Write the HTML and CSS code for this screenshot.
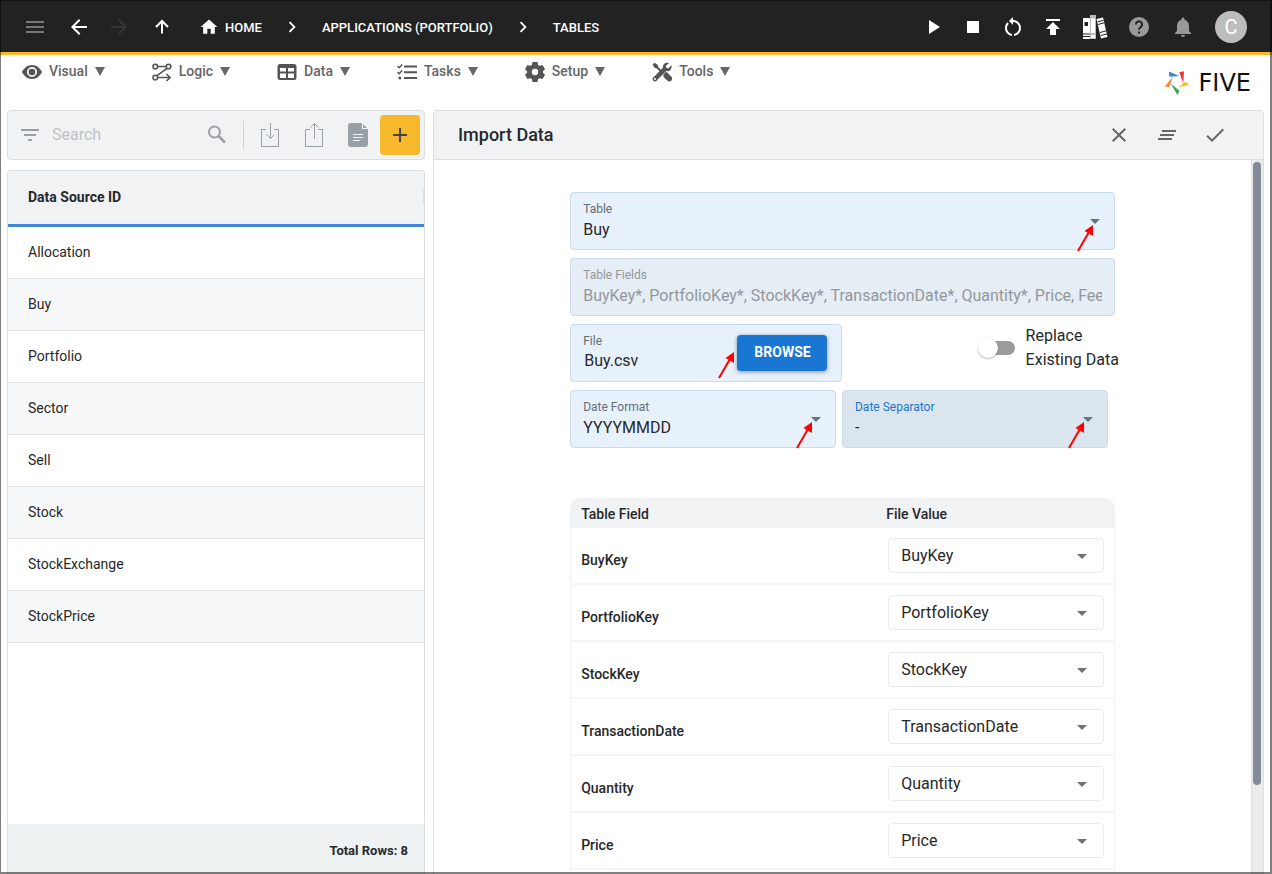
FILE: index.html
```html
<!DOCTYPE html>
<html lang="en">
<head>
<meta charset="utf-8">
<title>Import Data - Five</title>
<link rel="stylesheet" href="styles.css">
</head>
<body>
<div class="app">
  <header class="topbar">
    <button class="icon-btn dim" aria-label="Menu"><svg width="24" height="24" viewBox="0 0 24 24"><path d="M3 18h18v-2H3zm0-5h18v-2H3zm0-7v2h18V6z"/></svg></button>
    <nav class="crumbs" aria-label="Breadcrumb">
      <button class="icon-btn" aria-label="Back"><svg width="24" height="24" viewBox="0 0 24 24"><path d="M20 11H7.800l5.600-5.600L12 4l-8 8 8 8 1.400-1.400L7.800 13H20z"/></svg></button>
      <button class="icon-btn off" aria-label="Forward"><svg width="24" height="24" viewBox="0 0 24 24"><path d="M12 4l-1.400 1.400L16.200 11H4v2h12.200l-5.600 5.600L12 20l8-8z"/></svg></button>
      <button class="icon-btn up" aria-label="Up"><svg width="20" height="24" viewBox="0 0 20 24" class="line"><path d="M10 18.500V6M4 12l6-6 6 6" stroke-width="2"/></svg></button>
      <a class="crumb home" href="#"><svg width="20" height="20" viewBox="0 0 24 24"><path d="M10 20v-6h4v6h5v-8h3L12 3 2 12h3v8z"/></svg>HOME</a>
      <svg class="chev" width="20" height="20" viewBox="1 1 22 22"><path d="M10 6L8.600 7.400l4.600 4.600-4.600 4.600L10 18l6-6z"/></svg>
      <a class="crumb" href="#">APPLICATIONS (PORTFOLIO)</a>
      <svg class="chev" width="20" height="20" viewBox="1 1 22 22"><path d="M10 6L8.600 7.400l4.600 4.600-4.600 4.600L10 18l6-6z"/></svg>
      <a class="crumb" href="#">TABLES</a>
    </nav>
    <div class="actions">
      <button class="icon-btn" aria-label="Run"><svg width="24" height="24" viewBox="0 0 24 24"><path d="M8 5v14l11-7z"/></svg></button>
      <button class="icon-btn" aria-label="Stop"><svg width="24" height="24" viewBox="0 0 24 24"><path d="M6 6h12v12H6z"/></svg></button>
      <button class="icon-btn" aria-label="Restart"><svg width="24" height="24" viewBox="0 0 24 24"><path d="M12 5V2L8 6l4 4V7c3.310 0 6 2.690 6 6 0 2.970-2.170 5.430-5 5.910v2.020c3.950-.49 7-3.850 7-7.930 0-4.420-3.580-8-8-8zm-6 8c0-1.650.67-3.150 1.760-4.240L6.340 7.340C4.900 8.790 4 10.790 4 13c0 4.080 3.050 7.440 7 7.930v-2.020c-2.830-.48-5-2.940-5-5.910z"/></svg></button>
      <button class="icon-btn" aria-label="Deploy"><svg width="24" height="24" viewBox="0 0 24 24"><path d="M5 4v2h14V4zm0 10h4v6h6v-6h4l-7-7z"/></svg></button>
      <button class="icon-btn wide" aria-label="Documentation"><svg width="26" height="26" viewBox="0 0 26 26"><path d="M1 4h7v21H1z"/><path fill="#bbb" d="M8 1h6v24H8z"/><path d="M9 4.500h4V19H9zM9 21h4v3H9z"/><path d="M14.500 5l6.500-1.500 4.500 19.500-6.500 1.500z"/><path class="ink" d="M2.500 8h3.500v4H2.500zM1 19.500h7v1H1zM1 22h7v1H1z"/><path d="M15.500 8l6-1.700M16 10.500l6-1.700M18 18.500l6.500-1.700M18.700 21.500l6.500-1.700" stroke="#222" fill="none"/></svg></button>
      <button class="icon-btn wide soft" aria-label="Help"><svg width="24" height="24" viewBox="0 0 24 24"><circle cx="12" cy="12" r="10"/><path d="M8.900 9.500a3.100 3.100 0 1 1 5 2.400c-1.200.9-1.900 1.300-1.900 2.900" fill="none" stroke="#222" stroke-width="2"/><path class="ink" d="M11 16.500h2v2h-2z"/></svg></button>
      <button class="icon-btn wide soft" aria-label="Notifications"><svg width="24" height="24" viewBox="0 0 24 24"><path d="M12 22a2 2 0 0 0 2-2h-4a2 2 0 0 0 2 2zm6-6v-5c0-3.100-1.600-5.600-4.500-6.300V4a1.500 1.500 0 0 0-3 0v.7C7.600 5.400 6 7.900 6 11v5l-2 2v1h16v-1z"/></svg></button>
      <button class="avatar" aria-label="Account">C</button>
    </div>
  </header>

  <div class="menubar">
    <nav class="menus" aria-label="Main">
      <button class="menu"><svg width="20" height="20" viewBox="0 0 20 20"><path fill-rule="evenodd" d="M0 10c2-4.200 5.600-7 10-7s8 2.800 10 7c-2 4.200-5.600 7-10 7S2 14.200 0 10zm10-5a5 5 0 1 0 0 10 5 5 0 0 0 0-10z"/><circle cx="10" cy="10" r="3.300"/></svg><span>Visual</span><i></i></button>
      <button class="menu"><svg width="20" height="20" viewBox="0 0 20 20"><g class="line" stroke-width="1.600"><circle cx="3.300" cy="4.500" r="2.300"/><circle cx="16.500" cy="4.500" r="2.300"/><circle cx="3.300" cy="15.500" r="2.300"/><path d="M5.700 4.500h8.500M15 6.300L5 13.700M5.700 15.500H18M14.500 12l3.500 3.500-3.500 3.500"/></g></svg><span>Logic</span><i></i></button>
      <button class="menu"><svg width="20" height="20" viewBox="0 0 20 20"><path fill-rule="evenodd" d="M3 2h14a2.500 2.500 0 0 1 2.500 2.500v11A2.500 2.500 0 0 1 17 18H3a2.500 2.500 0 0 1-2.500-2.500v-11A2.500 2.500 0 0 1 3 2zm0 4v3.500h6V6zm8 0v3.500h6V6zm-8 5.500V16h6v-4.500zm8 0V16h6v-4.500z"/></svg><span>Data</span><i></i></button>
      <button class="menu"><svg width="20" height="20" viewBox="0 0 20 20"><path d="M7 3.500h13v2H7zM7 9.200h13v2H7zM7 15h13v2H7z"/><circle cx="2.800" cy="16" r="1.500"/><path class="line" stroke-width="1.500" d="M.5 4l1.700 1.700L5.200 2.500M.5 10l1.700 1.700L5.200 8.500"/></svg><span>Tasks</span><i></i></button>
      <button class="menu"><svg width="20" height="20" viewBox="0 0 20 20"><path fill-rule="evenodd" d="M7.500 0h5l.7 2.900 1.600.9L17.600 3l2.400 4.200-2 2.100v1.500l2 2L17.600 17l-2.800-.8-1.600.9-.7 2.900h-5l-.7-2.900-1.600-.9-2.800.8L0 12.800l2-2V9.300L0 7.200 2.400 3l2.800.8 1.600-.9zM10 6.800a3.200 3.200 0 1 0 0 6.400 3.200 3.200 0 0 0 0-6.400z"/></svg><span>Setup</span><i></i></button>
      <button class="menu"><svg width="20" height="20" viewBox="0 0 20 20"><path d="M2.500.8l3 2 .8 2.200 3.700 3.700L8.500 10.200 4.800 6.500l-2.200-.8-2-3zM11.500 12l3-2.200 4.700 4.700a2.500 2.500 0 0 1-3.700 4.200L11.500 15z"/><path fill-rule="evenodd" d="M17 1l-3.200 3 .6 1.800 1.800.6L19.400 3.200c1 3.500-1.700 6.600-5.200 5.900L4.600 18.700a2.300 2.300 0 0 1-3.300-3.300L10.900 5.800C10.200 2.500 13.500-.3 17 1zM3 16a1 1 0 1 0 0 2 1 1 0 0 0 0-2z"/></svg><span>Tools</span><i></i></button>
    </nav>
    <a class="brand" href="#"><svg width="24" height="24" viewBox="0 0 24 24"><path fill="#3f83dc" d="M4 .5L14.300 5l-10 .7z"/><path fill="#e5353b" d="M14.300 1.200l4.700-1-.8 12z"/><path fill="#f8b82c" d="M13.500 16.200l6.800-5.500 3.700 3z"/><path fill="#3aa655" d="M5.700 12.700l8.800 7-2.200 4z"/><path fill="#f58634" d="M7.800 5.500L4.300 16.300 0 15.500z"/></svg><span>FIVE</span></a>
  </div>

  <main class="content">
    <section class="side">
      <div class="tools">
        <svg class="filter" width="24" height="24" viewBox="0 0 24 24"><path d="M3 6v2h18V6zm3 5v2h12v-2zm4 5v2h4v-2z"/></svg>
        <input class="search" type="search" placeholder="Search" aria-label="Search">
        <button class="tool" aria-label="Find"><svg width="24" height="24" viewBox="0 0 24 24"><circle cx="9.500" cy="9" r="5.500" fill="none" stroke="#98a0a6" stroke-width="2"/><path d="M13.500 13l6.500 6.500" stroke="#98a0a6" stroke-width="2.500"/></svg></button>
        <div class="rule"></div>
        <button class="tool" aria-label="Import"><svg width="20" height="26" viewBox="0 0 20 26" class="line" stroke-width="1"><path d="M6 7.500H1.500v17h17v-17H14M10.500 1v15.500M6.500 12.500l4 4 4-4"/></svg></button>
        <button class="tool" aria-label="Export"><svg width="20" height="26" viewBox="0 0 20 26" class="line" stroke-width="1"><path d="M6 7.500H1.500v17h17v-17H14M10.500 17V1.500M6.500 5.500l4-4 4 4"/></svg></button>
        <button class="tool" aria-label="Report"><svg width="20" height="24" viewBox="0 0 20 24"><path d="M3 0h11l6 6v15a3 3 0 0 1-3 3H3a3 3 0 0 1-3-3V3a3 3 0 0 1 3-3z"/><path d="M14.500 0v5.500H20M5 11.500h10M5 14.500h10M5 17.500h7" stroke="#f1f2f4" stroke-width="1.200" fill="none"/></svg></button>
        <button class="add" aria-label="Add"><svg width="24" height="24" viewBox="0 0 24 24"><path d="M19 13h-6v6h-2v-6H5v-2h6V5h2v6h6z"/></svg></button>
      </div>
      <div class="list">
        <table class="sources">
          <thead><tr><th scope="col"><div class="head">Data Source ID</div></th></tr></thead>
          <tbody>
            <tr><td>Allocation</td></tr>
            <tr><td>Buy</td></tr>
            <tr><td>Portfolio</td></tr>
            <tr><td>Sector</td></tr>
            <tr><td>Sell</td></tr>
            <tr><td>Stock</td></tr>
            <tr><td>StockExchange</td></tr>
            <tr><td>StockPrice</td></tr>
          </tbody>
        </table>
        <div class="total">Total Rows: 8</div>
      </div>
    </section>

    <section class="panel">
      <div class="panel-head">
        <h1>Import Data</h1>
        <button class="head-btn" aria-label="Close"><svg width="24" height="24" viewBox="0 0 24 24"><path d="M19 6.400L17.600 5 12 10.600 6.400 5 5 6.400l5.600 5.600L5 17.600 6.400 19l5.600-5.600 5.600 5.600 1.400-1.400-5.600-5.600z"/></svg></button>
        <button class="head-btn" aria-label="Clear all"><svg width="24" height="24" viewBox="0 0 24 24"><path d="M5 13h14v-2H5zm-2 4h14v-2H3zM7 7v2h14V7z"/></svg></button>
        <button class="head-btn" aria-label="Save"><svg width="24" height="24" viewBox="0 0 24 24"><path d="M9 16.200L4.800 12l-1.400 1.400L9 19 21 7l-1.400-1.400z"/></svg></button>
      </div>
      <div class="panel-body">
        <div class="form-area">
          <div class="field">
            <label for="table">Table</label>
            <select id="table"><option>Buy</option></select>
            <svg class="pointer" width="18" height="28" viewBox="0 0 18 28"><path d="M1 27L12 8" stroke="red" stroke-width="2"/><path fill="red" d="M16 1v11L7.500 7z"/></svg>
          </div>
          <div class="field disabled">
            <label for="fields">Table Fields</label>
            <input id="fields" type="text" disabled value="BuyKey*, PortfolioKey*, StockKey*, TransactionDate*, Quantity*, Price, Fees">
          </div>
          <div class="file-row">
            <div class="field file">
              <div class="file-text">
                <label for="file">File</label>
                <input id="file" type="text" readonly value="Buy.csv">
              </div>
              <button class="browse">BROWSE</button>
              <svg class="pointer" width="18" height="28" viewBox="0 0 18 28"><path d="M1 27L12 8" stroke="red" stroke-width="2"/><path fill="red" d="M16 1v11L7.500 7z"/></svg>
            </div>
            <div class="switch">
              <input id="replace" type="checkbox" role="switch">
              <label for="replace">Replace<br>Existing Data</label>
            </div>
          </div>
          <div class="date-row">
            <div class="field">
              <label for="format">Date Format</label>
              <select id="format"><option>YYYYMMDD</option></select>
              <svg class="pointer" width="18" height="28" viewBox="0 0 18 28"><path d="M1 27L12 8" stroke="red" stroke-width="2"/><path fill="red" d="M16 1v11L7.500 7z"/></svg>
            </div>
            <div class="field focused">
              <label for="separator">Date Separator</label>
              <select id="separator"><option>-</option></select>
              <svg class="pointer" width="18" height="28" viewBox="0 0 18 28"><path d="M1 27L12 8" stroke="red" stroke-width="2"/><path fill="red" d="M16 1v11L7.500 7z"/></svg>
            </div>
          </div>
          <table class="mapping">
            <thead><tr><th scope="col">Table Field</th><th scope="col">File Value</th></tr></thead>
            <tbody>
              <tr><td><label for="m1">BuyKey</label></td><td><div class="pick"><select id="m1"><option>BuyKey</option></select></div></td></tr>
              <tr><td><label for="m2">PortfolioKey</label></td><td><div class="pick"><select id="m2"><option>PortfolioKey</option></select></div></td></tr>
              <tr><td><label for="m3">StockKey</label></td><td><div class="pick"><select id="m3"><option>StockKey</option></select></div></td></tr>
              <tr><td><label for="m4">TransactionDate</label></td><td><div class="pick"><select id="m4"><option>TransactionDate</option></select></div></td></tr>
              <tr><td><label for="m5">Quantity</label></td><td><div class="pick"><select id="m5"><option>Quantity</option></select></div></td></tr>
              <tr><td><label for="m6">Price</label></td><td><div class="pick"><select id="m6"><option>Price</option></select></div></td></tr>
            </tbody>
          </table>
        </div>
        <div class="scroll"><div class="thumb"></div></div>
      </div>
    </section>
  </main>
</div>
</body>
</html>
```
FILE: styles.css
```css
* { box-sizing: border-box; }

body {
  margin: 0;
  font-family: Roboto, "Liberation Sans", sans-serif;
  font-size: 14px;
  color: #26282b;
  background: #fff;
}

button {
  font: inherit;
  color: inherit;
  border: 0;
  padding: 0;
  background: none;
  cursor: pointer;
}

a { color: inherit; text-decoration: none; }
svg { display: block; flex: none; fill: currentColor; }
.line { fill: none; stroke: currentColor; }
.ink { fill: #222; }

.app {
  height: 100vh;
  display: flex;
  flex-direction: column;
  overflow: hidden;
}

/* Window outline drawn over the whole page */
.app::after {
  content: "";
  position: fixed;
  inset: 0;
  border: solid rgba(0, 0, 0, 0.5);
  border-width: 1px 2px 2px 1px;
  pointer-events: none;
}

/* Top bar */
.topbar {
  flex: none;
  height: 55px;
  display: flex;
  align-items: center;
  padding: 2px 25px 0 15px;
  background: #222;
  border-bottom: 3px solid #fbb829;
  color: #fff;
}

.icon-btn {
  width: 40px;
  height: 40px;
  display: flex;
  align-items: center;
  justify-content: center;
}

.icon-btn.wide { width: 44px; }
.icon-btn.dim { color: #777; }
.icon-btn.off { color: #353535; }
.icon-btn.soft { color: #999; }

.crumbs {
  display: flex;
  align-items: center;
  margin-left: 4px;
}

.crumb {
  display: flex;
  align-items: center;
  gap: 6px;
  font-size: 13px;
  font-weight: 500;
}

.crumb.home { margin-left: 17px; }
.icon-btn.up { margin-left: 3px; }
.chev { margin: 0 20px; }

.actions {
  margin-left: auto;
  display: flex;
  align-items: center;
}

.avatar {
  width: 32px;
  height: 32px;
  margin-left: 10px;
  border-radius: 50%;
  background: #bdbdbd;
  font-size: 20px;
}

/* Menu bar */
.menubar {
  flex: none;
  height: 55px;
  display: flex;
  justify-content: space-between;
  align-items: flex-start;
  padding: 6px 21px 0 22px;
}

.menus {
  display: flex;
  gap: 47px;
}

.menu {
  display: flex;
  align-items: center;
  gap: 7px;
  height: 22px;
  font-weight: 500;
  color: #666;
}

.menu svg { color: #555; }
.menu span, .menu i { margin-bottom: 2px; }
.menu i { border: solid transparent; border-width: 9px 5px 0; border-top-color: #666; }

.brand {
  display: flex;
  align-items: center;
  gap: 10px;
  height: 24px;
  margin-top: 10px;
  font-family: "DejaVu Sans", sans-serif;
  font-size: 24px;
  color: #111;
}

/* Page body */
.content {
  flex: 1;
  min-height: 0;
  display: grid;
  grid-template-columns: minmax(0, 418fr) minmax(0, 831fr);
  gap: 8px;
  padding: 0 8px 0 7px;
}

.side {
  display: flex;
  flex-direction: column;
  gap: 10px;
  min-height: 0;
}

.tools {
  flex: none;
  height: 50px;
  display: flex;
  align-items: center;
  padding: 0 4px 0 10px;
  background: #f1f2f4;
  border: 1px solid #dcdee0;
  border-radius: 4px;
  color: #98a0a6;
}

.search {
  flex: 1;
  min-width: 0;
  margin-left: 10px;
  padding: 0 0 2px;
  border: 0;
  outline: 0;
  background: none;
  font: inherit;
  font-size: 16px;
}

.search::placeholder { color: #bfc2c5; }

.tool {
  width: 44px;
  height: 40px;
  display: flex;
  align-items: center;
  justify-content: center;
}

.rule { width: 1px; height: 28px; margin: 0 4px; background: #d0d3d6; }

.add {
  width: 40px;
  height: 40px;
  display: flex;
  align-items: center;
  justify-content: center;
  border-radius: 4px;
  background: #f8b82c;
  color: #444;
}

.list {
  flex: 1;
  display: flex;
  flex-direction: column;
  justify-content: space-between;
  border: 1px solid #dcdee0;
  border-bottom: 0;
  border-radius: 4px 4px 0 0;
  overflow: hidden;
}

.sources { width: 100%; border-collapse: separate; border-spacing: 0; }

.sources th {
  height: 56px;
  padding: 0 0 2px;
  background: #f1f2f4;
  border-bottom: 3px solid #4285d9;
  text-align: left;
  font-weight: 700;
}

.head { padding-left: 20px; border-right: 1px solid #dcdee0; }

.sources td {
  height: 52px;
  padding: 0 20px 2px;
  border-bottom: 1px solid #e2e4e6;
}

.sources tr:nth-child(even) td { background: #f7f8fa; }

.total {
  padding: 17px 16px;
  height: 50px;
  background: #eef2f3;
  text-align: right;
  font-size: 13px;
  font-weight: 700;
  line-height: 20px;
}

/* Import panel */
.panel {
  display: flex;
  flex-direction: column;
  min-height: 0;
  border: 1px solid #dcdee0;
  border-bottom: 0;
  border-radius: 4px 4px 0 0;
}

.panel-head {
  flex: none;
  height: 49px;
  display: flex;
  align-items: center;
  padding: 0 24px;
  background: #f1f2f4;
  border-bottom: 1px solid #dcdee0;
}

h1 { flex: 1; margin: 0; padding-bottom: 2px; font-size: 18px; font-weight: 500; }

.head-btn {
  width: 48px;
  height: 40px;
  display: flex;
  align-items: center;
  justify-content: center;
  color: #666;
}

.panel-body { flex: 1; min-height: 0; display: flex; }

.form-area {
  flex: 1;
  min-width: 0;
  overflow: hidden;
  display: grid;
  grid-template-columns: 1fr minmax(0, 4fr) 1fr;
  align-content: start;
  row-gap: 8px;
  padding-top: 32px;
}

.form-area > * { grid-column: 2; }

.field {
  position: relative;
  height: 58px;
  padding: 8px 12px;
  background: #e7f1fc;
  border: 1px solid #c9dbec;
  border-radius: 4px;
}

.field label {
  display: block;
  font-size: 12px;
  line-height: 16px;
  color: #666c73;
}

.field select,
.field input {
  display: block;
  width: 100%;
  height: 24px;
  padding: 0;
  border: 0;
  outline: 0;
  appearance: none;
  background: none;
  font: inherit;
  font-size: 16px;
  color: #26282b;
}

.field:has(select)::after,
.pick::after {
  content: "";
  position: absolute;
  right: 14px;
  top: 26px;
  border: solid transparent;
  border-width: 5px 5px 0;
  border-top-color: #6d7277;
  pointer-events: none;
}

.pointer { position: absolute; right: 19px; top: 31px; z-index: 1; }
.date-row .pointer { right: 21px; top: 30px; }

.field.disabled { background: #e5edf5; }
.field.disabled label,
.field.disabled input { color: #93989e; }

.field.focused { background: #dbe5ee; }
.field.focused label { color: #1976d2; }

.file-row { display: grid; grid-template-columns: 1fr 1fr; }

.field.file { display: flex; padding-right: 14px; }
.file-text { flex: 1; min-width: 0; }
.file-text input { padding: 0 1px 2px; }
.file .pointer { right: 105px; top: 26px; }

.browse {
  width: 90px;
  height: 36px;
  margin-top: 2px;
  padding-bottom: 2px;
  border-radius: 4px;
  background: #1976d2;
  box-shadow: 0 1px 4px rgba(0, 0, 0, 0.4);
  color: #fff;
  font-weight: 700;
}

.switch {
  display: flex;
  justify-content: flex-end;
  align-items: flex-start;
  gap: 11px;
  margin-right: -4px;
  font-size: 16px;
  line-height: 24px;
}

.switch input {
  position: relative;
  appearance: none;
  width: 34px;
  height: 14px;
  margin: 17px 0 0;
  border-radius: 7px;
  background: #9b9b9b;
}

.switch input::before {
  content: "";
  position: absolute;
  left: -3px;
  top: -3px;
  width: 20px;
  height: 20px;
  border-radius: 50%;
  background: #fff;
  box-shadow: 0 1px 2px rgba(0, 0, 0, 0.3);
}

.date-row {
  display: grid;
  grid-template-columns: 1fr 1fr;
  gap: 6px;
  padding-right: 7px;
}

/* Field mapping */
.mapping {
  width: 100%;
  margin-top: 42px;
  border-collapse: separate;
  border-spacing: 0;
  table-layout: fixed;
}

.mapping th {
  height: 30px;
  padding: 2px 11px 0;
  background: #f1f2f4;
  text-align: left;
  font-weight: 500;
}

.mapping th:first-child { width: 56%; border-radius: 10px 0 0; }
.mapping th:last-child { border-radius: 0 10px 0 0; }

.mapping td {
  height: 57px;
  padding: 8px 10px 0;
  border-bottom: 2px solid #f5f5f6;
  font-weight: 500;
}

.mapping td:first-child { border-left: 1px solid #f1f2f4; }
.mapping td:last-child { padding: 10px 10px 10px 13px; border-right: 1px solid #f1f2f4; }

.pick { position: relative; }
.pick::after { right: 17px; top: 16px; }

.pick select {
  display: block;
  width: 100%;
  height: 35px;
  padding: 0 12px;
  appearance: none;
  border: 1px solid #e8eaec;
  border-radius: 4px;
  background: #fff;
  font: inherit;
  font-size: 16px;
  font-weight: 400;
  color: #26282b;
}

/* Scroll track */
.scroll {
  flex: none;
  width: 12px;
  padding: 2px 1px 0;
  background: #ebebeb;
  border-left: 1px solid #ddd;
}

.thumb { width: 8px; height: 87.5%; border-radius: 4px; background: #838a9a; }
```
